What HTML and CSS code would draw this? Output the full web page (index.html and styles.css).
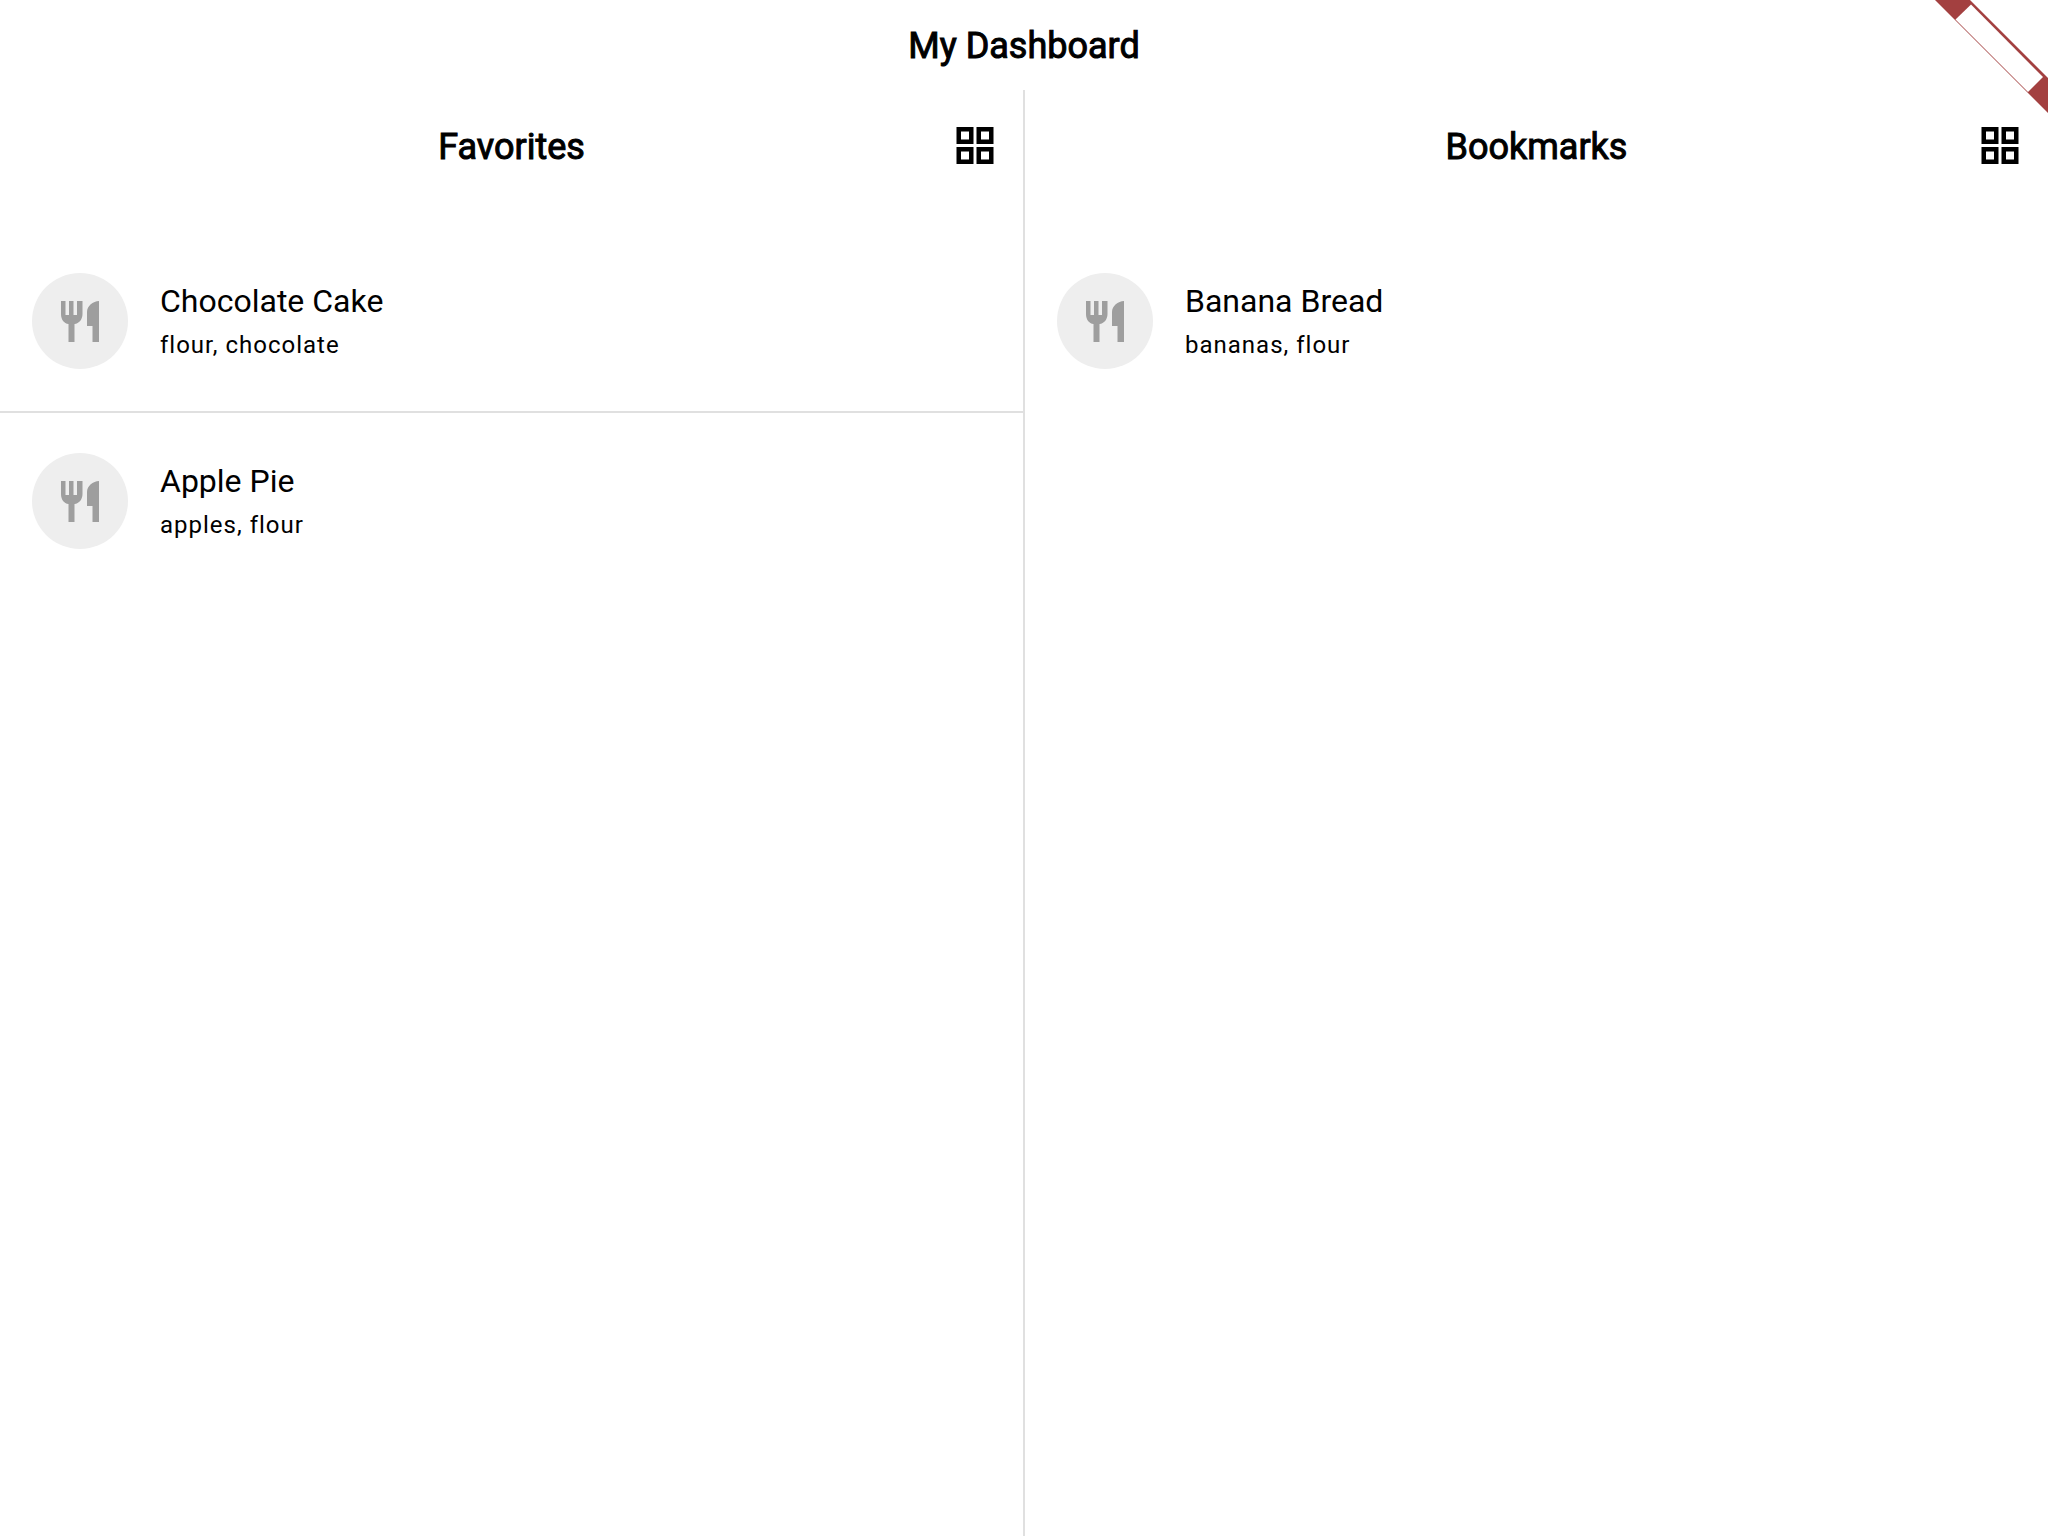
FILE: index.html
```html
<!DOCTYPE html>
<html lang="en">
<head>
<meta charset="utf-8">
<meta name="viewport" content="width=device-width, initial-scale=1">
<title>My Dashboard</title>
<link rel="stylesheet" href="styles.css">
</head>
<body>
<svg class="symbols" aria-hidden="true">
  <symbol id="grid" viewBox="0 0 48 48"><path fill-rule="evenodd" d="M5.500 5h17v17H5.500zM10 9.500v8h8v-8zM25.500 5h17v17H25.500zM30 9.500v8h8v-8zM5.500 25h17v17H5.500zM10 29.500v8h8v-8zM25.500 25h17v17H25.500zM30 29.500v8h8v-8z"/></symbol>
  <symbol id="cutlery" viewBox="0 0 48 48"><path d="M5 4h4.500v14H13V4h4.500v14H21V4h5.500v13c0 5.500-3.500 9.500-8 10v18h-6V27C8 26.500 5 22.500 5 17zM43 4v41h-6.500V29H31V15C31 9 37 4 43 4z"/></symbol>
</svg>
<header class="topbar"><h1 class="title">My Dashboard</h1></header>
<main class="panels">
  <section class="panel" aria-labelledby="favorites">
    <div class="panel-head">
      <h2 class="title" id="favorites">Favorites</h2>
      <button class="view-button" type="button" aria-label="Grid view"><svg class="icon"><use href="#grid"/></svg></button>
    </div>
    <ul class="list">
      <li class="item">
        <span class="avatar"><svg class="icon"><use href="#cutlery"/></svg></span>
        <div><p class="name">Chocolate Cake</p><p class="ingredients">flour, chocolate</p></div>
      </li>
      <li class="item">
        <span class="avatar"><svg class="icon"><use href="#cutlery"/></svg></span>
        <div><p class="name">Apple Pie</p><p class="ingredients">apples, flour</p></div>
      </li>
    </ul>
  </section>
  <section class="panel" aria-labelledby="bookmarks">
    <div class="panel-head">
      <h2 class="title" id="bookmarks">Bookmarks</h2>
      <button class="view-button" type="button" aria-label="Grid view"><svg class="icon"><use href="#grid"/></svg></button>
    </div>
    <ul class="list">
      <li class="item">
        <span class="avatar"><svg class="icon"><use href="#cutlery"/></svg></span>
        <div><p class="name">Banana Bread</p><p class="ingredients">bananas, flour</p></div>
      </li>
    </ul>
  </section>
</main>
<svg class="ribbon" viewBox="0 0 113 113" aria-hidden="true">
  <path fill="#a34040" d="M0 0h35l78 78v35z"/>
  <path fill="#fff" d="M20.500 19.500L36 4.500l72 72.500-15 15z"/>
</svg>
</body>
</html>
```
FILE: styles.css
```css
* {
  box-sizing: border-box;
  margin: 0;
  padding: 0;
}

body {
  display: flex;
  flex-direction: column;
  min-height: 100vh;
  background: #fff;
  color: #000;
  font-family: Roboto, "Liberation Sans", sans-serif;
}

.symbols {
  position: absolute;
  width: 0;
  height: 0;
}

.topbar {
  display: grid;
  place-items: center;
  height: 90px;
}

.title {
  padding-top: 2px;
  font-size: 36px;
  line-height: 44px;
  font-weight: 400;
  -webkit-text-stroke: 1px #000;
}

.panels {
  flex: 1;
  display: grid;
  grid-template-columns: 1fr 2px 1fr;
}

.panels::before {
  content: "";
  grid-column: 2;
  grid-row: 1;
  background: #e0e0e0;
}

.panel {
  grid-row: 1;
  grid-column: 1;
}

.panel + .panel {
  grid-column: 3;
}

.panel-head {
  display: grid;
  grid-template-columns: 48px 1fr 48px;
  align-items: center;
  height: 112px;
  padding: 0 24px;
}

.panel-head .title {
  grid-column: 2;
  text-align: center;
}

.view-button {
  width: 48px;
  height: 48px;
  border: 0;
  background: none;
  color: inherit;
  cursor: pointer;
}

.icon {
  display: block;
  width: 48px;
  height: 48px;
  fill: currentColor;
}

.list {
  list-style: none;
  padding-top: 29px;
}

.item {
  display: flex;
  align-items: center;
  gap: 32px;
  padding: 42px 32px;
}

.item + .item {
  padding-top: 40px;
  border-top: 2px solid #e0e0e0;
}

.avatar {
  display: grid;
  place-items: center;
  width: 96px;
  height: 96px;
  border-radius: 50%;
  background: #eee;
  color: #9e9e9e;
}

.name {
  font-size: 32px;
  line-height: 48px;
}

.ingredients {
  font-size: 24px;
  line-height: 40px;
  letter-spacing: 1px;
}

.ribbon {
  position: absolute;
  top: 0;
  right: 0;
  width: 113px;
  height: 113px;
}
```
